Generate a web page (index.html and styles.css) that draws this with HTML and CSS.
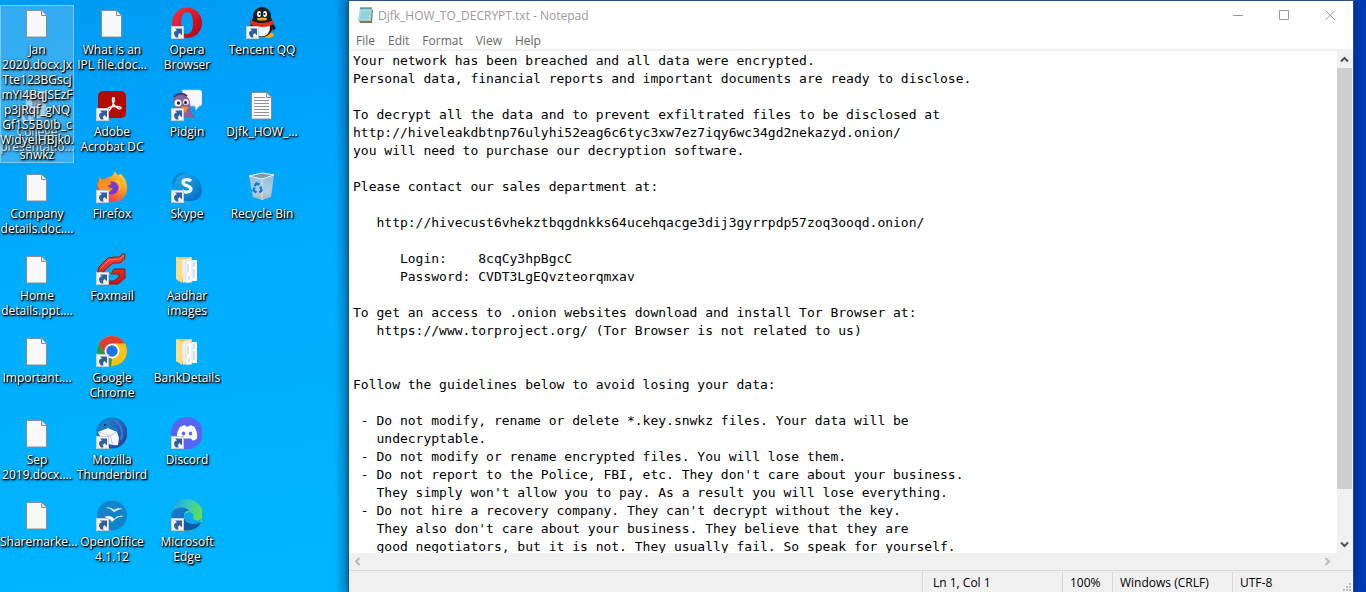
FILE: index.html
```html
<!DOCTYPE html>
<html lang="en">
<head>
<meta charset="utf-8">
<title>Desktop</title>
<link rel="stylesheet" href="styles.css">
</head>
<body>
<svg class="sprite" aria-hidden="true">
  <defs>
    <linearGradient id="operaG" x1="0" y1="0" x2="1" y2="1"><stop offset="0" stop-color="#ff3040"/><stop offset="1" stop-color="#b00012"/></linearGradient>
    <linearGradient id="foxG" x1="1" y1="0" x2="0.2" y2="1"><stop offset="0" stop-color="#fff04a"/><stop offset="0.5" stop-color="#ff8a1c"/><stop offset="1" stop-color="#f0206a"/></linearGradient>
    <linearGradient id="skyG" x1="0" y1="0" x2="1" y2="1"><stop offset="0" stop-color="#28a8ea"/><stop offset="1" stop-color="#0078c8"/></linearGradient>
    <linearGradient id="edgeG" x1="0" y1="0" x2="1" y2="0.4"><stop offset="0" stop-color="#1e9ee0"/><stop offset="0.5" stop-color="#34c8c0"/><stop offset="1" stop-color="#62e04a"/></linearGradient>
    <linearGradient id="edgeB" x1="0" y1="0" x2="1" y2="1"><stop offset="0" stop-color="#1884d8"/><stop offset="1" stop-color="#0c4c98"/></linearGradient>
    <linearGradient id="binG" x1="0" y1="0" x2="0" y2="1"><stop offset="0" stop-color="#9cc0d6"/><stop offset="0.7" stop-color="#c4d4de"/><stop offset="1" stop-color="#c4b8b0"/></linearGradient>
    <linearGradient id="fmG" x1="0" y1="0" x2="0" y2="1"><stop offset="0" stop-color="#f84838"/><stop offset="1" stop-color="#c81410"/></linearGradient>
    <linearGradient id="tbG" x1="0" y1="0" x2="1" y2="1"><stop offset="0" stop-color="#208ad8"/><stop offset="1" stop-color="#283c94"/></linearGradient>
  </defs>
  <symbol id="file" viewBox="0 0 32 32"><path d="M6.500 3.500h15l5 5v21.500h-20z" fill="#f8f9fa" stroke="#8c8c8c"/><path d="M21.500 3.500v5h5" fill="#e4e4e4" stroke="#8c8c8c"/></symbol>
  <symbol id="folder" viewBox="0 0 32 32"><path d="M6 4h16v20l-10 5-6-3z" fill="#eec45c"/><path d="M11 7l10-2v22l-8 3z" fill="#f0f0ea"/><path d="M21 7h6v21h-6z" fill="#fdfdfd"/><path d="M16 8l6-1v22l-6 1z" fill="#fff" stroke="#ccd2d4" stroke-width=".6"/><path d="M6 4l6 3v23l-6-4z" fill="#ffdc84"/><path d="M18 11v8M24 9v5M24 16v9M19 23v4" stroke="#b8d0dc" stroke-width="1.200"/></symbol>
  <symbol id="cut" viewBox="0 0 32 32"><rect x="1.500" y="19.500" width="12" height="12" fill="#f6f6f6" stroke="#c6ccd0"/><path d="M5 21.500h7v7l-2.200-2.200c-1.800.4-2 2-1.300 4.200H6c-3-3.500-2.500-6.500 1-7z" fill="#2f5f9f"/></symbol>
</svg>
<main class="screen">
  <section class="desktop" aria-label="Desktop icons">
    <button class="item selected"><svg class="icon"><use href="#file"/></svg><span class="label">Jan<br>2020.docx.Jx<br>Tte123BGscj<br>mYi4BqJSEzF<br>p3jRqf_gNQ<br>Gf1S5B0Ib_c<br>WidyeIHBjk0.<br>snwkz</span></button>
    <button class="item faded"><svg class="icon" viewBox="0 0 32 32"><rect x="6" y="2" width="20" height="27" fill="#fff"/><path d="M12 7h10v10H12z" fill="#c87060"/><use href="#cut"/></svg><span class="label">College<br>presentatio...</span></button>
    <button class="item"><svg class="icon"><use href="#file"/></svg><span class="label">Company<br>details.doc....</span></button>
    <button class="item"><svg class="icon"><use href="#file"/></svg><span class="label">Home<br>details.ppt....</span></button>
    <button class="item"><svg class="icon"><use href="#file"/></svg><span class="label">Important....</span></button>
    <button class="item"><svg class="icon"><use href="#file"/></svg><span class="label">Sep<br>2019.docx....</span></button>
    <button class="item"><svg class="icon"><use href="#file"/></svg><span class="label">Sharemarke...</span></button>

    <button class="item"><svg class="icon"><use href="#file"/></svg><span class="label">What is an<br>IPL file.doc...</span></button>
    <button class="item"><svg class="icon" viewBox="0 0 32 32"><rect x="3" y="2" width="28" height="27" rx="5" fill="#b30b00"/><path d="M12 21.500c-1-2 4-4 7.500-4.200 4 0 7 .8 6.500 2-.8 1.800-5-.6-7-3.500-1.600-2.400-2.200-7-.6-7 1.800 0 .6 5.500-1.400 8.700-1.600 2.900-3.800 5.500-5 4z" fill="none" stroke="#fff" stroke-width="1.400"/><use href="#cut"/></svg><span class="label">Adobe<br>Acrobat DC</span></button>
    <button class="item"><svg class="icon" viewBox="0 0 32 32"><path d="M20 0c1 2 2 3 3 4l3-1c4 4 6 8 6 14 0 8-6 14-14.500 14C8 31 2 25 2 17c0-4 1-7 3-10v4c2-2 4-4 7-4 4-1 7-3 8-7z" fill="url(#foxG)"/><circle cx="17" cy="17" r="6.500" fill="#7438d8"/><path d="M3 15L4.500 6l4 4 5-1 3 4-4 2c2 2 3 2 5 2-1 5-8 7-13 2z" fill="#ff9020"/><path d="M18 9c6-1 9 8 5 13 4-4 3-10 0-13z" fill="#ffd038"/><use href="#cut"/></svg><span class="label">Firefox</span></button>
    <button class="item"><svg class="icon" viewBox="0 0 32 32"><path d="M30 1l-.5 5-4.500 4h-7l-8 7-2 3v5l3 3h8l5-4v-3h-8l3-5h11v9l-7 6H9l-5-4-1-9 1-4 9-9 6-1h6l2-3z" fill="url(#fmG)" stroke="#941812"/><path d="M5 16l9-9 11-1 4-4" fill="none" stroke="#ff8870" stroke-width=".7"/><use href="#cut"/></svg><span class="label">Foxmail</span></button>
    <button class="item"><svg class="icon" viewBox="0 0 32 32"><circle cx="17" cy="16" r="15" fill="#fbc116"/><path d="M4 8.500A15 15 0 0 1 30 8.500H17L10.500 20z" fill="#e33b2e"/><path d="M4 8.500l6.500 11.500L17 23.500 16 31A15 15 0 0 1 4 8.500z" fill="#26984c"/><circle cx="17" cy="16" r="7.500" fill="#fff"/><circle cx="17" cy="16" r="5.700" fill="#1a73e8"/><use href="#cut"/></svg><span class="label">Google<br>Chrome</span></button>
    <button class="item"><svg class="icon" viewBox="0 0 32 32"><circle cx="17" cy="16" r="15.500" fill="url(#tbG)"/><path d="M3 15l10-4 9 4 2 6-1 7c-8 2-17-5-20-13z" fill="#f8fafc"/><path d="M4 15l11 4 8-5M15 19l3 9" fill="none" stroke="#c0ccd8"/><path d="M1 14C3 3 15-1 21 2c-6 1-7 4-4 8 5 0 8 5 7 11 1-5-3-9-8-9-4-2-8-3-15 2z" fill="#1c7ccc"/><path d="M20 3c6 5 9 11 6 20" fill="none" stroke="#3c78cc" stroke-width="2"/><circle cx="10" cy="8" r="1" fill="#123"/><use href="#cut"/></svg><span class="label">Mozilla<br>Thunderbird</span></button>
    <button class="item"><svg class="icon" viewBox="0 0 32 32"><circle cx="17" cy="16.500" r="15" fill="#1284cc"/><path d="M11 9c3-1 6 0 8 2 3-2 5-2 9-1-4 0-6 1-9 3-2-2-4-4-8-4z" fill="#fff"/><path d="M9 18c5-2 8-1 10 2 3-3 6-4 10-3-6 1-8 2-12 6-2-3-4-4-8-5z" fill="#fff"/><use href="#cut"/></svg><span class="label">OpenOffice<br>4.1.12</span></button>

    <button class="item"><svg class="icon" viewBox="0 0 32 32"><path fill-rule="evenodd" d="M17 .500a15 15.300 0 1 0 .1 0zM17 5c4 0 6 4.500 6 11s-2 11-6 11-6-4.500-6-11 2-11 6-11z" fill="url(#operaG)"/><use href="#cut"/></svg><span class="label">Opera<br>Browser</span></button>
    <button class="item"><svg class="icon" viewBox="0 0 32 32"><path d="M12 1h17q3 0 3 3v10q0 3-3 3l-3 4-1-4H15z" fill="#f8f8fa" stroke="#c8c8d0" stroke-width=".7"/><path d="M4 9c3-5 12-4 15 1 2 4 1 9 2 12l4 7H4l1-12C3 14 2 12 4 9z" fill="#84649c"/><path d="M4 8c3-4 9-4 13-1" fill="none" stroke="#483460" stroke-width="2"/><circle cx="8" cy="14" r="3.500" fill="#fff"/><circle cx="16" cy="13" r="3" fill="#e8e0f0"/><circle cx="8.500" cy="14" r="1.700" fill="#302040"/><circle cx="15.500" cy="13.500" r="1.500" fill="#302040"/><path d="M11 17l8 1-4 6z" fill="#f08a1c"/><use href="#cut"/></svg><span class="label">Pidgin</span></button>
    <button class="item"><svg class="icon" viewBox="0 0 32 32"><circle cx="18" cy="17" r="13" fill="#0078c4"/><circle cx="13" cy="12" r="10.500" fill="#0888d0"/><circle cx="22" cy="20" r="10" fill="#0c74c8"/><circle cx="17" cy="15" r="12.500" fill="url(#skyG)"/><path d="M21 10c-2-2-8-2-8 1.500 0 4 8 2.500 8 6.500 0 3.500-6 4-9 1.500" fill="none" stroke="#fff" stroke-width="3.200"/><use href="#cut"/></svg><span class="label">Skype</span></button>
    <button class="item"><svg class="icon"><use href="#folder"/></svg><span class="label">Aadhar<br>images</span></button>
    <button class="item"><svg class="icon"><use href="#folder"/></svg><span class="label">BankDetails</span></button>
    <button class="item"><svg class="icon" viewBox="0 0 32 32"><circle cx="17" cy="16" r="16" fill="#5865f2"/><path d="M12 9l3-1 1 1.500h3L20 8l4 1.500c3 4 3.500 8 3 12-2 1.800-3 2-4.500 2L21 21.500h-7.500L12 23.500c-2 0-3-.500-5-2-.5-4 .5-8 3-11.500z" fill="#fff"/><ellipse cx="13.500" cy="16.500" rx="1.700" ry="2" fill="#5865f2"/><ellipse cx="20.500" cy="16.500" rx="1.700" ry="2" fill="#5865f2"/><use href="#cut"/></svg><span class="label">Discord</span></button>
    <button class="item"><svg class="icon" viewBox="0 0 32 32"><circle cx="17" cy="16" r="16" fill="url(#edgeG)"/><path d="M1 16C2 8 14 6 20 12c-4-1-7 2-6 6 1 6 8 8 17 5-4 7-11 10-18 8C5 29 1 23 1 16z" fill="url(#edgeB)"/><path d="M14 17c1-4 7-5 9-2 1 3-1 5 2 6 3 1 6 0 7-2-1 4-5 7-10 6-5-1-8-4-8-8z" fill="#0ca8ee"/><path d="M13 20c3 5 10 8 18 4-3 5-9 8-15 7-3-3-4-7-3-11z" fill="#1058a8"/><use href="#cut"/></svg><span class="label">Microsoft<br>Edge</span></button>

    <button class="item"><svg class="icon" viewBox="0 0 32 32"><ellipse cx="11" cy="28" rx="6" ry="3" fill="#f8a81c"/><ellipse cx="23" cy="28" rx="6" ry="3" fill="#f8a81c"/><path d="M8 14L3 22l3 2zM26 14l5 7-3 3z" fill="#161616"/><ellipse cx="17" cy="18" rx="11" ry="12" fill="#181818"/><ellipse cx="17" cy="21" rx="8" ry="8.500" fill="#f4f4f4"/><ellipse cx="17" cy="9" rx="9" ry="9" fill="#1c1c1c"/><ellipse cx="14" cy="7" rx="2" ry="3" fill="#fff"/><ellipse cx="20" cy="7" rx="2" ry="3" fill="#fff"/><circle cx="14.700" cy="7" r="1" fill="#111"/><circle cx="19.300" cy="7" r="1" fill="#111"/><ellipse cx="17" cy="12" rx="5" ry="1.500" fill="#f8a81c"/><path d="M6 13c7 4 15 4 22 0l1 4c-6 4-18 4-24 0z" fill="#e42c1c"/><path d="M10 17l4 1-1 6-4-1z" fill="#d82418"/><use href="#cut"/></svg><span class="label">Tencent QQ</span></button>
    <button class="item"><svg class="icon" viewBox="0 0 32 32"><use href="#file"/><path d="M9 8.500h11M9 11.500h15M9 14.500h15M9 17.500h15M9 20.500h15M9 23.500h15M9 26.500h15" stroke="#8e9296"/></svg><span class="label">Djfk_HOW_...</span></button>
    <button class="item"><svg class="icon" viewBox="0 0 32 32"><path d="M4 5l13-3 12 2-3 22-9 3-9-3z" fill="url(#binG)" opacity=".9"/><path d="M4 5l13 3 12-4-12-2z" fill="#7e99a8" stroke="#e8f2f8"/><path d="M17 8v21" stroke="#edf4f8" stroke-width=".7"/><path d="M9.500 15l2-2.500 3 1M15.500 15.500l1 4-2 2M11.500 21.500l-3-2 1-3" fill="none" stroke="#1478d4" stroke-width="2.400"/></svg><span class="label">Recycle Bin</span></button>
  </section>

  <section class="window" aria-label="Notepad">
    <header class="titlebar">
      <svg class="app-icon" viewBox="0 0 17 17"><path d="M14 2l2 1-1 13H3l-1-2z" fill="#8a7448"/><path d="M3 1h12l-1 13H1z" fill="#8fd0dc"/><path d="M3 3h11l-1 10H2z" fill="#a8e0e8"/><path d="M4 5h9M4 7h9M3 9h9M3 11h9" stroke="#5aaabb" stroke-width=".6"/><path d="M4 0v2M6 0v2M8 0v2M10 0v2M12 0v2M14 0v2" stroke="#445b64"/></svg>
      <h1 class="title">Djfk_HOW_TO_DECRYPT.txt - Notepad</h1>
      <div class="caption">
        <button class="cap" aria-label="Minimize"><svg class="glyph" viewBox="0 0 11 11"><path d="M0 5.500h10"/></svg></button>
        <button class="cap" aria-label="Maximize"><svg class="glyph" viewBox="0 0 11 11"><path d="M.5.500h9v9h-9z"/></svg></button>
        <button class="cap" aria-label="Close"><svg class="glyph" viewBox="0 0 11 11"><path d="M.5.500l9.500 9.500M10 .500L.500 10"/></svg></button>
      </div>
    </header>
    <nav class="menu">
      <button>File</button><button>Edit</button><button>Format</button><button>View</button><button>Help</button>
    </nav>
    <div class="editor">
      <textarea class="text" wrap="off" readonly spellcheck="false" aria-label="Document text">Your network has been breached and all data were encrypted.
Personal data, financial reports and important documents are ready to disclose.

To decrypt all the data and to prevent exfiltrated files to be disclosed at
http://hiveleakdbtnp76ulyhi52eag6c6tyc3xw7ez7iqy6wc34gd2nekazyd.onion/
you will need to purchase our decryption software.

Please contact our sales department at:

   http://hivecust6vhekztbqgdnkks64ucehqacge3dij3gyrrpdp57zoq3ooqd.onion/

      Login:    8cqCy3hpBgcC
      Password: CVDT3LgEQvzteorqmxav

To get an access to .onion websites download and install Tor Browser at:
   https://www.torproject.org/ (Tor Browser is not related to us)


Follow the guidelines below to avoid losing your data:

 - Do not modify, rename or delete *.key.snwkz files. Your data will be
   undecryptable.
 - Do not modify or rename encrypted files. You will lose them.
 - Do not report to the Police, FBI, etc. They don't care about your business.
   They simply won't allow you to pay. As a result you will lose everything.
 - Do not hire a recovery company. They can't decrypt without the key.
   They also don't care about your business. They believe that they are
   good negotiators, but it is not. They usually fail. So speak for yourself.</textarea>
      <div class="vbar">
        <button class="arrow" aria-label="Scroll up"><svg class="chev" viewBox="0 0 9 9"><path d="M1 6.500l3.500-3.500L8 6.500"/></svg></button>
        <div class="thumb"></div>
        <div class="track"></div>
        <button class="arrow" aria-label="Scroll down"><svg class="chev" viewBox="0 0 9 9"><path d="M1 2.500l3.500 3.500L8 2.500"/></svg></button>
      </div>
    </div>
    <div class="hbar">
      <button class="arrow" aria-label="Scroll left"><svg class="chev" viewBox="0 0 9 9"><path d="M6.500 1L3 4.500 6.500 8"/></svg></button>
      <button class="arrow" aria-label="Scroll right"><svg class="chev" viewBox="0 0 9 9"><path d="M2.500 1L6 4.500 2.500 8"/></svg></button>
    </div>
    <footer class="status">
      <span class="cell pos">Ln 1, Col 1</span><span class="cell zoom">100%</span><span class="cell eol">Windows (CRLF)</span><span class="cell enc">UTF-8</span>
      <svg class="grip" viewBox="0 0 9 9"><path d="M6 0h2v2H6zM3 3h2v2H3zM6 3h2v2H6zM0 6h2v2H0zM3 6h2v2H3zM6 6h2v2H6z" fill="#bcbcbc"/></svg>
    </footer>
  </section>
</main>
</body>
</html>
```
FILE: styles.css
```css
* { box-sizing: border-box; }
body { margin: 0; font: 12px/15px "Open Sans", "Noto Sans", sans-serif; }
button { border: 0; padding: 0; background: none; font: inherit; color: inherit; }
.sprite { position: absolute; width: 0; height: 0; }

.screen {
  display: grid;
  grid-template-columns: 349px minmax(0, 1fr) 13px;
  height: 100vh;
  padding-top: 1px;
  overflow: hidden;
  background: linear-gradient(90deg, #0099f0 349px, #003cb4 349px);
}

.desktop {
  display: grid;
  grid-template-columns: repeat(4, 74px);
  grid-template-rows: repeat(7, 82px);
  grid-auto-flow: column;
  column-gap: 1px;
  margin-top: -1px;
  padding-top: 5px;
  background:
    linear-gradient(90deg, transparent 335px, rgba(0, 60, 110, 0.35) 349px),
    linear-gradient(172deg, #009bf2 0, #00a4fb 25%, #00aeff 50%, #00b5ff 100%);
}
.item {
  display: flex;
  flex-direction: column;
  align-items: safe center;
  gap: 3px;
  padding-top: 2px;
  color: #fff;
}
.item.selected {
  position: relative;
  z-index: 1;
  height: 158px;
  background: rgba(130, 195, 240, 0.4);
  box-shadow: inset 0 0 0 1px rgba(160, 215, 250, 0.7);
}
.icon { width: 32px; height: 32px; flex: none; margin-right: 2px; }
.faded .icon { opacity: 0.7; }
.label {
  white-space: nowrap;
  text-align: center;
  text-shadow: 1px 1px 1px #000, 1px 1px 2px #000, 0 1px 3px rgba(0, 0, 0, 0.7);
}

.window {
  display: flex;
  flex-direction: column;
  min-width: 0;
  background: #fff;
  box-shadow: 0 0 0 1px #24508c, 0 0 10px rgba(0, 0, 40, 0.5);
}
.titlebar { display: flex; align-items: center; flex: none; height: 28px; padding-left: 8px; }
.app-icon { width: 17px; height: 17px; }
.title { flex: 1; margin: 0 0 0 4px; font-size: 12px; font-weight: 400; color: #999; }
.caption { display: flex; }
.cap { display: grid; place-items: center; width: 46px; height: 28px; }
.glyph { width: 11px; height: 11px; fill: none; stroke: #999; }
.menu {
  display: flex;
  flex: none;
  gap: 13px;
  height: 22px;
  padding: 2px 0 0 7px;
  border-bottom: 2px solid #f0f0f0;
  color: #666;
}

.editor { display: flex; flex: 1; min-height: 0; }
.text {
  flex: 1;
  min-width: 0;
  padding: 1px 0 0 4px;
  border: 0;
  outline: 0;
  resize: none;
  overflow: hidden;
  font: 13px/18px "DejaVu Sans Mono", "Liberation Mono", monospace;
  color: #000;
  background: #fff;
}
.vbar { display: flex; flex-direction: column; width: 16px; padding-right: 1px; background: #f0f0f0; }
.arrow { display: grid; place-items: center; width: 17px; height: 17px; flex: none; }
.vbar .arrow { width: 15px; }
.thumb { flex: 421; background: #cdcdcd; }
.track { flex: 47; }
.chev { width: 9px; height: 9px; fill: none; stroke: #505050; stroke-width: 2; }
.hbar { display: flex; justify-content: space-between; flex: none; padding-right: 17px; background: #f0f0f0; }
.hbar .chev { stroke: #bcbcbc; }
.status {
  position: relative;
  display: flex;
  justify-content: flex-end;
  flex: none;
  height: 22px;
  border-top: 1px solid #d7d7d7;
  background: #f0f0f0;
}
.cell { margin-top: 1px; padding: 3px 0 0 7px; border-left: 1px solid #d7d7d7; }
.pos { width: 140px; padding-left: 10px; }
.zoom { width: 50px; }
.eol { width: 120px; }
.enc { width: 121px; }
.grip { position: absolute; right: 1px; bottom: 0; width: 9px; height: 9px; }
```
